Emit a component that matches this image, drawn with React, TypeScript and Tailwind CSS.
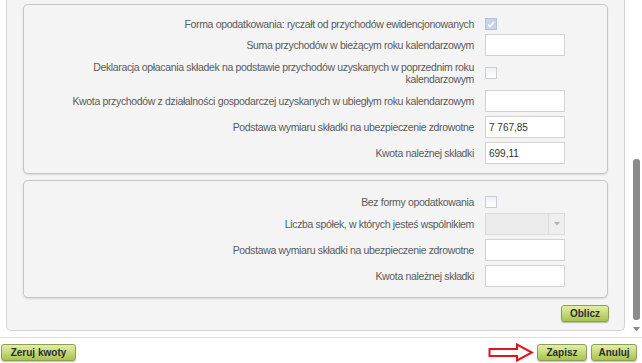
import React from "react";

const labelCls = "flex-1 text-right text-[10.5px] tracking-[-0.35px] leading-[12px] text-[#5a5a5a]";

function TextBox({ value }: { value?: string }) {
  return (
    <div className="h-[22px] w-[80px] border border-[#d2d2d2] bg-white pl-[3px] flex items-center text-[10px] text-[#333]">
      {value}
    </div>
  );
}

function CheckBox({ checked }: { checked?: boolean }) {
  if (checked) {
    return (
      <div className="h-[12px] w-[12px] border border-[#b3c1d6] bg-[#c7d4e7] flex items-center justify-center">
        <svg width="8" height="7" viewBox="0 0 8 7">
          <path d="M1 3.5 L3 5.5 L7 1" stroke="#fff" strokeWidth="1.6" fill="none" />
        </svg>
      </div>
    );
  }
  return <div className="h-[12px] w-[12px] border border-[#c9ced8] bg-gradient-to-b from-[#eef1f6] to-white" />;
}

function Row({
  label,
  children,
  className = "",
}: {
  label: React.ReactNode;
  children: React.ReactNode;
  className?: string;
}) {
  return (
    <div className={`flex items-center gap-[11px] pr-[42px] ${className}`}>
      <div className={labelCls}>{label}</div>
      <div className="w-[80px] flex items-center">{children}</div>
    </div>
  );
}

function GreenButton({ children, className = "" }: { children: React.ReactNode; className?: string }) {
  return (
    <button
      className={`h-[17px] rounded-[3px] border border-[#8d9f55] bg-gradient-to-b from-[#e3eea6] to-[#a8c44b] text-[10px] font-bold leading-none text-[#2e2e2e] shadow-[0_1px_1px_rgba(0,0,0,0.25)] ${className}`}
    >
      {children}
    </button>
  );
}

const panelCls =
  "rounded-[5px] border border-[#c6c6c6] bg-[#f4f4f4] shadow-[0_1px_2px_rgba(0,0,0,0.12)]";

export default function App() {
  return (
    <div className="w-[642px] h-[363px] bg-white overflow-hidden font-['Liberation_Sans',Arial,sans-serif]">
      <div className="flex h-[337px]">
        <div className="w-[631px] pl-[6px] pr-[6px]">
          <div className="h-[331px] rounded-b-[5px] border-x border-b border-[#d3d3d3] bg-[#f4f4f4] px-[16px] pt-[4px]">
            <div className={`${panelCls} h-[170px] pt-[11px]`}>
              <Row label="Forma opodatkowania: ryczałt od przychodów ewidencjonowanych" className="h-[16px]">
                <CheckBox checked />
              </Row>
              <Row label="Suma przychodów w bieżącym roku kalendarzowym" className="mt-[2px]">
                <TextBox />
              </Row>
              <Row
                label={
                  <>
                    Deklaracja opłacania składek na podstawie przychodów uzyskanych w poprzednim roku
                    <br />
                    kalendarzowym
                  </>
                }
                className="mt-[4px] h-[26px]"
              >
                <CheckBox />
              </Row>
              <Row
                label="Kwota przychodów z działalności gospodarczej uzyskanych w ubiegłym roku kalendarzowym"
                className="mt-[4px]"
              >
                <TextBox />
              </Row>
              <Row label="Podstawa wymiaru składki na ubezpieczenie zdrowotne" className="mt-[4px]">
                <TextBox value="7 767,85" />
              </Row>
              <Row label="Kwota należnej składki" className="mt-[4px]">
                <TextBox value="699,11" />
              </Row>
            </div>

            <div className={`${panelCls} mt-[6px] h-[118px] pt-[13px]`}>
              <Row label="Bez formy opodatkowania" className="h-[16px]">
                <CheckBox />
              </Row>
              <Row label="Liczba spółek, w których jesteś wspólnikiem" className="mt-[3px]">
                <div className="flex h-[22px] w-[80px] border border-[#dadada] bg-[#ececec]">
                  <div className="flex-1" />
                  <div className="flex w-[16px] items-center justify-center border-l border-[#dcdcdc] bg-[#efefef]">
                    <svg width="6" height="4" viewBox="0 0 6 4">
                      <path d="M0 0 L6 0 L3 3.5 Z" fill="#b0b0b0" />
                    </svg>
                  </div>
                </div>
              </Row>
              <Row label="Podstawa wymiaru składki na ubezpieczenie zdrowotne" className="mt-[4px]">
                <TextBox />
              </Row>
              <Row label="Kwota należnej składki" className="mt-[4px]">
                <TextBox />
              </Row>
            </div>

            <div className="mt-[7px] flex justify-end -mr-[1px]">
              <GreenButton className="w-[48px]">Oblicz</GreenButton>
            </div>
          </div>
        </div>
        <div className="w-[11px] flex flex-col items-center pt-[159px]">
          <div className="h-[161px] w-[7px] rounded-[3px] bg-[#8b8b8b]" />
          <svg width="7" height="5" viewBox="0 0 7 5" className="mt-[7px]">
            <path d="M0 0 L7 0 L3.5 4.5 Z" fill="#8a8a8a" />
          </svg>
        </div>
      </div>

      <div className="flex h-[26px] items-start border-t border-[#dedede] pt-[6px] pl-[1px] pr-[5px]">
        <GreenButton className="w-[75px]">Zeruj kwoty</GreenButton>
        <div className="flex-1" />
        <svg width="46" height="19" viewBox="0 0 46 19" className="-mt-[1px] mr-[3px]">
          <path
            d="M1.5 6 L29 6 L29 1.5 L44 9.5 L29 17.5 L29 13 L1.5 13 Z"
            fill="white"
            stroke="#e3131b"
            strokeWidth="2"
            strokeLinejoin="miter"
          />
        </svg>
        <GreenButton className="w-[50px]">Zapisz</GreenButton>
        <GreenButton className="ml-[4px] w-[46px]">Anuluj</GreenButton>
      </div>
    </div>
  );
}
